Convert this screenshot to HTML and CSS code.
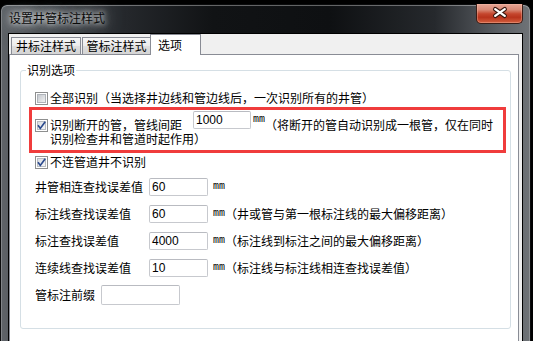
FILE: index.html
```html
<!DOCTYPE html>
<html lang="zh-CN">
<head>
<meta charset="utf-8">
<title>设置井管标注样式</title>
<link rel="stylesheet" href="styles.css">
</head>
<body>
<div class="window">
  <div class="titlebar">
    <span class="title">设置井管标注样式</span>
    <span class="close">
      <svg width="47" height="19" viewBox="0 0 47 19">
        <path d="M19 6 L29 13 M29 6 L19 13" stroke="#3a1810" stroke-width="4.6" stroke-linecap="round" fill="none"/>
        <path d="M19 6 L29 13 M29 6 L19 13" stroke="#ffffff" stroke-width="2.4" stroke-linecap="round" fill="none"/>
      </svg>
    </span>
  </div>
  <div class="client">
    <div class="tabs">
      <div class="tab t1">井标注样式</div>
      <div class="tab t2">管标注样式</div>
      <div class="tab active">选项</div>
    </div>
    <div class="panel">
      <fieldset class="group">
        <legend>识别选项</legend>
        <div class="check-row">
          <svg class="cb" width="13" height="13" viewBox="0 0 13 13">
            <defs><linearGradient id="cg1" x1="0" y1="0" x2="1" y2="1"><stop offset="0" stop-color="#c2c6cc"/><stop offset="1" stop-color="#f3f3f3"/></linearGradient></defs>
            <rect x="0.5" y="0.5" width="12" height="12" fill="#fff" stroke="#8e8f8f"/>
            <rect x="2.5" y="2.5" width="8" height="8" fill="url(#cg1)" stroke="#b0b4ba"/>
          </svg>
          <span class="lbl">全部识别（当选择井边线和管边线后，一次识别所有的井管）</span>
        </div>
        <div class="highlight">
          <div class="hl-line1">
            <svg class="cb cb-hl" width="13" height="13" viewBox="0 0 13 13">
              <defs><linearGradient id="cg2" x1="0" y1="0" x2="1" y2="1"><stop offset="0" stop-color="#d8dce2"/><stop offset="1" stop-color="#f7f7f7"/></linearGradient></defs>
              <rect x="0.5" y="0.5" width="12" height="12" fill="#fff" stroke="#8e8f8f"/>
              <rect x="2.5" y="2.5" width="8" height="8" fill="url(#cg2)" stroke="#b8bcc2"/>
              <path d="M3 6.3 L5.3 9.4 L10.2 2.8" fill="none" stroke="#2b4a8e" stroke-width="1.7"/>
            </svg>
            <span class="hl-text">识别断开的管，管线间距</span>
            <span class="input w-hl">1000</span>
            <span class="mm mm-hl">mm</span>
            <span class="hl-text">（将断开的管自动识别成一根管，仅在同时</span>
          </div>
          <div class="hl-line2">识别检查井和管道时起作用）</div>
        </div>
        <div class="check-row row3">
          <svg class="cb" width="13" height="13" viewBox="0 0 13 13">
            <defs><linearGradient id="cg3" x1="0" y1="0" x2="1" y2="1"><stop offset="0" stop-color="#d8dce2"/><stop offset="1" stop-color="#f7f7f7"/></linearGradient></defs>
            <rect x="0.5" y="0.5" width="12" height="12" fill="#fff" stroke="#8e8f8f"/>
            <rect x="2.5" y="2.5" width="8" height="8" fill="url(#cg3)" stroke="#b8bcc2"/>
            <path d="M3 6.3 L5.3 9.4 L10.2 2.8" fill="none" stroke="#2b4a8e" stroke-width="1.7"/>
          </svg>
          <span class="lbl">不连管道井不识别</span>
        </div>
        <div class="fields">
          <div class="field">
            <span class="flabel">井管相连查找误差值</span>
            <span class="input">60</span>
            <span class="mm">mm</span>
          </div>
          <div class="field">
            <span class="flabel">标注线查找误差值</span>
            <span class="input">60</span>
            <span class="mm">mm</span><span class="note">（井或管与第一根标注线的最大偏移距离）</span>
          </div>
          <div class="field">
            <span class="flabel">标注查找误差值</span>
            <span class="input">4000</span>
            <span class="mm">mm</span><span class="note">（标注线到标注之间的最大偏移距离）</span>
          </div>
          <div class="field">
            <span class="flabel">连续线查找误差值</span>
            <span class="input">10</span>
            <span class="mm">mm</span><span class="note">（标注线与标注线相连查找误差值）</span>
          </div>
          <div class="field">
            <span class="flabel short">管标注前缀</span>
            <span class="input wide"></span>
          </div>
        </div>
      </fieldset>
    </div>
  </div>
</div>
</body>
</html>
```
FILE: styles.css
```css
html, body {
  margin: 0;
  padding: 0;
}
body {
  background: #000;
  width: 533px;
  height: 341px;
  overflow: hidden;
  font-family: "Noto Sans CJK SC", "Noto Sans", sans-serif;
  font-size: 12px;
  color: #000;
}

.window {
  box-sizing: border-box;
  width: 531px;
  height: 345px;
  margin-top: 4px;
  border: 1px solid #0b0c0d;
  border-bottom: none;
  border-radius: 7px 7px 0 0;
  background: linear-gradient(90deg, #5f6368 0%, #44484d 10%, #24272b 24%, #111315 40%, #0e1012 62%, #26292d 82%, #5a5e63 94%, #6f7377 100%);
  box-shadow: inset 0 1px 0 rgba(255,255,255,0.35), inset 1px 0 0 rgba(255,255,255,0.22), inset -1px 0 0 rgba(255,255,255,0.22);
  display: flex;
  flex-direction: column;
}

.titlebar {
  height: 28px;
  display: flex;
  align-items: flex-start;
  flex: none;
}
.title {
  margin: 6px 0 0 8px;
  line-height: 14px;
  font-size: 12px;
  color: #0a0a0a;
  text-shadow: 0 0 5px rgba(255,255,255,0.9), 0 0 10px rgba(215,220,225,0.85), 0 0 16px rgba(190,195,200,0.7), 0 0 22px rgba(170,175,180,0.5);
}
.close {
  margin: -1px 7px 0 auto;
  width: 47px;
  height: 20px;
  box-sizing: border-box;
  border: 1px solid #3c1d16;
  border-top: none;
  border-radius: 0 0 5px 5px;
  background: linear-gradient(180deg, #e6a595 0%, #d98a76 30%, #c5462d 52%, #b8331c 70%, #d4603f 100%);
  box-shadow: inset 0 0 0 1px rgba(255,200,180,0.35);
  display: flex;
  align-items: flex-start;
  justify-content: center;
}
.close svg {
  display: block;
  margin-top: -1px;
}

.client {
  flex: 1;
  margin: 0 7px;
  border: 1px solid #000;
  border-bottom: none;
  background: #f0f0f0;
}

.tabs {
  display: flex;
  align-items: flex-end;
  height: 20px;
  padding-left: 2px;
}
.tab {
  box-sizing: border-box;
  height: 17px;
  border: 1px solid #898c95;
  border-bottom: none;
  background: linear-gradient(180deg, #f6f6f6 0%, #ececec 48%, #dfdfdf 52%, #d4d4d4 100%);
  line-height: 16px;
  text-align: center;
  font-size: 12px;
}
.t1 {
  width: 70px;
  margin-right: 1px;
}
.t2 {
  width: 69px;
}
.tab.active {
  width: 51px;
  height: 21px;
  margin-left: -1px;
  margin-bottom: -1px;
  background: #fff;
  line-height: 19px;
  text-align: left;
  padding-left: 7px;
  position: relative;
  z-index: 1;
}

.panel {
  margin-right: 3px;
  border: 1px solid #898c95;
  background: #fff;
  height: 300px;
}

.group {
  margin: 8px 7px 0 10px;
  padding: 14px 0 20px 0;
  border: 1px solid #d5dfe5;
  border-radius: 3px;
  min-width: 0;
}
.group legend {
  margin-left: 5px;
  padding: 0 1px;
  line-height: 14px;
  font-size: 12px;
}

.check-row {
  display: flex;
  align-items: center;
  height: 14px;
  padding-left: 14px;
}
.cb {
  display: block;
  flex: none;
}
.lbl {
  margin-left: 2px;
  line-height: 14px;
  white-space: nowrap;
}

.highlight {
  margin: 2px 4px 0 8px;
  border: 3px solid #f03c3c;
  padding: 0 0 5px 3px;
}
.hl-line1 {
  display: flex;
  align-items: flex-start;
  padding-top: 1px;
}
.cb-hl {
  margin-top: 8px;
}
.hl-text {
  margin-top: 7px;
  line-height: 13px;
  white-space: nowrap;
}
.hl-line1 .cb + .hl-text {
  margin-left: 2px;
}
.hl-line2 {
  padding-left: 15px;
  line-height: 13px;
  white-space: nowrap;
}

.row3 {
  margin-top: 2px;
}

.fields {
  margin-top: 4px;
  padding-left: 14px;
}
.field {
  display: flex;
  align-items: center;
  height: 27px;
  white-space: nowrap;
}
.flabel {
  width: 114px;
  flex: none;
  line-height: 14px;
}
.flabel.short {
  width: 66px;
}

.input {
  box-sizing: border-box;
  width: 59px;
  height: 18px;
  border: 1px solid #c7c9ce;
  border-top-color: #b9bbc1;
  border-radius: 2px;
  background: #fff;
  padding-left: 2px;
  font-family: "Liberation Sans", Arial, sans-serif;
  font-size: 12px;
  line-height: 16px;
  flex: none;
}
.input.wide {
  width: 79px;
  height: 20px;
}
.w-hl {
  width: 58px;
  margin-left: 11px;
}

.mm {
  font-family: "Liberation Mono", monospace;
  font-size: 10px;
  line-height: 14px;
  margin-left: 5px;
}
.mm-hl {
  margin-left: 2px;
  line-height: 18px;
}
.note {
  line-height: 14px;
}
```
